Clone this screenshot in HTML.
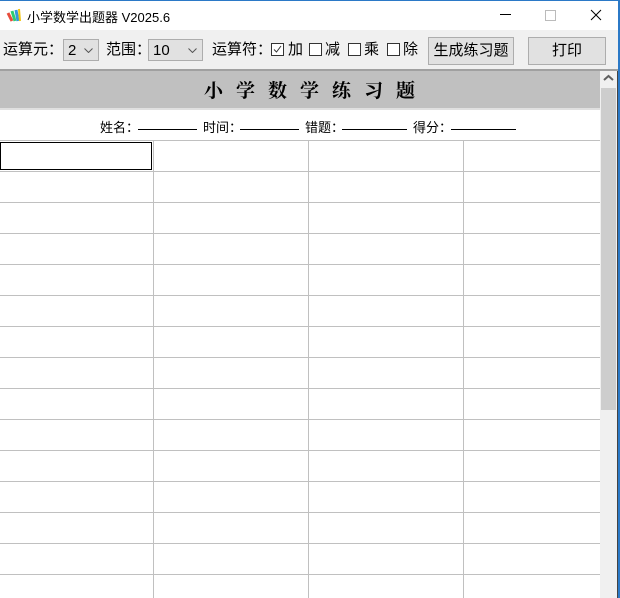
<!DOCTYPE html><html><head><meta charset="utf-8"><style>
body{margin:0;width:620px;height:598px;overflow:hidden;background:#fff;font-family:"Liberation Sans","Noto Sans CJK SC",sans-serif;position:relative}
.a{position:absolute}
.t{position:absolute;top:41px;font-size:15px;line-height:18px}
.cb{position:absolute;top:43px;width:11px;height:11px;border:1px solid #333;background:#fff}
.sel{position:absolute;height:22px;border:1px solid #adadad;background:#e1e1e1;font-size:15px;line-height:21px;padding-left:4px;box-sizing:border-box;top:39px}
.btn{position:absolute;top:37px;height:28px;border:1px solid #adadad;background:#e1e1e1;font-size:15px;text-align:center;line-height:26px;box-sizing:border-box}
.i{position:absolute;top:117px;font-size:13px}
.u{position:absolute;top:129px;height:1px;background:#000}
</style></head><body>
<div class="a" style="left:0;top:0;width:620px;height:1px;background:#2b79c7"></div>
<div class="a" style="left:618px;top:0;width:2px;height:598px;background:#2b79c7"></div>
<svg class="a" style="left:6px;top:7px" width="16" height="16"><path d="M2 6 L6 14" stroke="#e74c3c" stroke-width="3"/><path d="M6 4 L9 14" stroke="#2ecc71" stroke-width="3"/><path d="M10 3 L12 14" stroke="#3498db" stroke-width="3"/><path d="M13 2 L14 14" stroke="#f1c40f" stroke-width="2"/></svg>
<div class="a" style="left:27px;top:7px;font-size:13px">小学数学出题器 V2025.6</div>
<div class="a" style="left:500px;top:14px;width:11px;height:1px;background:#000"></div>
<div class="a" style="left:545px;top:10px;width:9px;height:9px;border:1px solid #bbb"></div>
<svg class="a" style="left:590px;top:9px" width="12" height="12"><path d="M1 1L11 11M11 1L1 11" stroke="#000"/></svg>
<div class="a" style="left:0;top:30px;width:618px;height:40px;background:#f0f0f0"></div>
<div class="t" style="left:3px">运算元：</div>
<div class="sel" style="left:63px;width:36px">2<svg style="position:absolute;right:5px;top:8px" width="9" height="5"><path d="M0.5 0.5L4.5 4.5L8.5 0.5" stroke="#555" fill="none"/></svg></div>
<div class="t" style="left:106px">范围：</div>
<div class="sel" style="left:148px;width:55px">10<svg style="position:absolute;right:5px;top:8px" width="9" height="5"><path d="M0.5 0.5L4.5 4.5L8.5 0.5" stroke="#555" fill="none"/></svg></div>
<div class="t" style="left:212px">运算符：</div>
<div class="cb" style="left:271px"><svg width="11" height="11" style="position:absolute;left:0;top:0"><path d="M2 5.5L4.5 8L9 2" stroke="#333" fill="none"/></svg></div>
<div class="t" style="left:288px">加</div>
<div class="cb" style="left:309px"></div><div class="t" style="left:325px">减</div>
<div class="cb" style="left:348px"></div><div class="t" style="left:364px">乘</div>
<div class="cb" style="left:387px"></div><div class="t" style="left:403px">除</div>
<div class="btn" style="left:428px;width:86px">生成练习题</div>
<div class="btn" style="left:528px;width:78px">打印</div>
<div class="a" style="left:0;top:69px;width:618px;height:2px;background:#a0a0a0"></div>
<div class="a" style="left:0;top:71px;width:600px;height:37px;background:#c0c0c0"></div>
<div class="a" style="left:204px;top:71px;font:bold 19px 'Noto Serif CJK SC',serif;line-height:37px;letter-spacing:13px;white-space:nowrap">小学数学练习题</div>
<div class="a" style="left:0;top:108px;width:600px;height:2px;background:#e0e0e0"></div>
<div class="i" style="left:100px">姓名：</div><div class="u" style="left:138px;width:59px"></div>
<div class="i" style="left:203px">时间：</div><div class="u" style="left:240px;width:59px"></div>
<div class="i" style="left:305px">错题：</div><div class="u" style="left:342px;width:65px"></div>
<div class="i" style="left:413px">得分：</div><div class="u" style="left:451px;width:65px"></div>
<svg class="a" style="left:0;top:0" width="600" height="598">
<g stroke="#c0c0c0" stroke-width="1">
<path d="M0 140.5H600M0 171.5H600M0 202.5H600M0 233.5H600M0 264.5H600M0 295.5H600M0 326.5H600M0 357.5H600M0 388.5H600M0 419.5H600M0 450.5H600M0 481.5H600M0 512.5H600M0 543.5H600M0 574.5H600"/>
<path d="M153.5 140V598M308.5 140V598M463.5 140V598"/>
</g>
<rect x="0.5" y="142.5" width="151" height="27" fill="none" stroke="#000"/>
</svg>
<div class="a" style="left:600px;top:71px;width:17px;height:527px;background:#f0f0f0"></div>
<div class="a" style="left:601px;top:88px;width:15px;height:322px;background:#cdcdcd"></div>
<svg class="a" style="left:603px;top:74px" width="11" height="8"><path d="M1 6L5.5 2L10 6" stroke="#606060" stroke-width="2" fill="none"/></svg>
<div class="a" style="left:617px;top:71px;width:1px;height:527px;background:#444"></div>
</body></html>
